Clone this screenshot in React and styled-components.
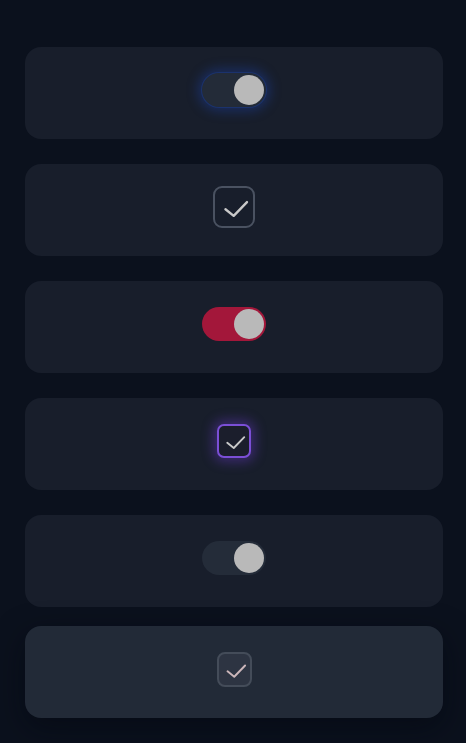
import React from 'react'
import styled, { createGlobalStyle, css } from 'styled-components'

const Global = createGlobalStyle`
    html, body {
        margin: 0;
        padding: 0;
        background: #0b111d;
        font-family: 'Inter', 'Liberation Sans', sans-serif;
    }
`

const Page = styled.div`
    min-height: 743px;
    box-sizing: border-box;
    padding: 47px 23px 20px 25px;
    display: flex;
    flex-direction: column;
    gap: 25px;
`

const Card = styled.div`
    height: 92px;
    box-sizing: border-box;
    padding: 25px 0 31px;
    border-radius: 16px;
    background: #181e2b;
    display: flex;
    justify-content: center;
    align-items: center;
    ${p => p.$hover && css`
        background: #222a37;
        transform: translateY(-6px);
        box-shadow: 0 10px 30px rgba(4, 8, 16, 0.55);
    `}
`

const Track = styled.div`
    width: 64px;
    height: 34px;
    box-sizing: border-box;
    padding: 2px;
    border-radius: 17px;
    display: flex;
    justify-content: ${p => (p.$on ? 'flex-end' : 'flex-start')};
    background: ${p => p.$color};
    box-shadow: ${p => p.$glow || 'none'};
`

const Knob = styled.div`
    width: 30px;
    height: 30px;
    border-radius: 50%;
    background: #b9b9b9;
`

const Box = styled.div`
    width: ${p => p.$size}px;
    height: ${p => p.$size}px;
    box-sizing: border-box;
    border-radius: ${p => p.$radius}px;
    border: 2px solid ${p => p.$border};
    background: ${p => p.$bg};
    box-shadow: ${p => p.$glow || 'none'};
    display: flex;
    align-items: center;
    justify-content: center;
    color: ${p => p.$tick};
`

const Tick = ({ size }) => (
    <svg width={size} height={size} viewBox="0 0 24 24" fill="none">
        <polyline
            points="6.6 13.4 11.8 17.6 20.2 8.9"
            stroke="currentColor"
            strokeWidth="1.5"
            strokeLinecap="round"
            strokeLinejoin="round"
        />
    </svg>
)

const App = () => (
    <>
        <Global />
        <Page>
            <Card>
                <Track
                    $on
                    $color="#232b38"
                    $glow="0 0 0 1px rgba(29, 65, 150, 0.4), 0 0 12px 4px rgba(30, 70, 180, 0.4)"
                >
                    <Knob />
                </Track>
            </Card>
            <Card>
                <Box $size={42} $radius={9} $border="#4a5261" $bg="transparent" $tick="#c9c9c9">
                    <Tick size={40} />
                </Box>
            </Card>
            <Card>
                <Track $on $color="#a3173a">
                    <Knob />
                </Track>
            </Card>
            <Card>
                <Box
                    $size={34}
                    $radius={7}
                    $border="#7b4fd6"
                    $bg="#1b1e2c"
                    $tick="#c9c9c9"
                    $glow="0 0 12px 4px rgba(110, 60, 210, 0.4)"
                >
                    <Tick size={34} />
                </Box>
            </Card>
            <Card>
                <Track $on $color="#242c39">
                    <Knob />
                </Track>
            </Card>
            <Card $hover>
                <Box $size={35} $radius={8} $border="#444c59" $bg="#2d3442" $tick="#cbb6ba">
                    <Tick size={35} />
                </Box>
            </Card>
        </Page>
    </>
)

export default App
